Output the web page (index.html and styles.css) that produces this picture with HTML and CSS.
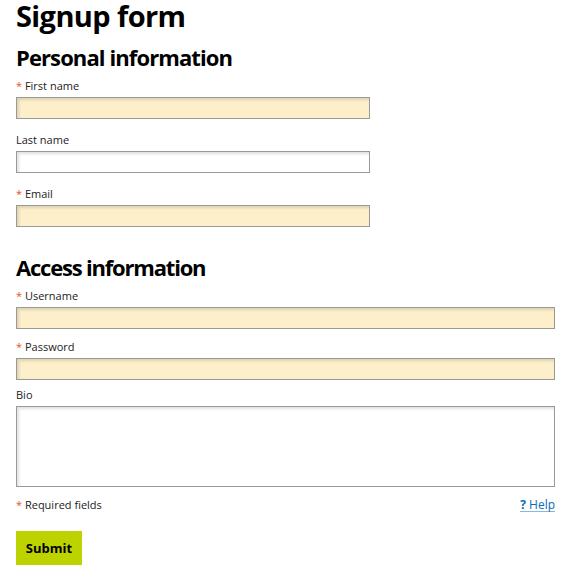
FILE: index.html
```html
<!DOCTYPE html>
<html>
<head>
<meta charset="utf-8">
<link rel="stylesheet" href="styles.css">
</head>
<body>
<form class="signup">
  <h1 class="title">Signup form</h1>
  <h2 class="section-title">Personal information</h2>
  <div class="field">
    <label class="label"><span class="req">*</span> First name</label>
    <input class="input input-short required" type="text">
  </div>
  <div class="field">
    <label class="label">Last name</label>
    <input class="input input-short" type="text">
  </div>
  <div class="field">
    <label class="label"><span class="req">*</span> Email</label>
    <input class="input input-short required" type="text">
  </div>
  <h2 class="section-title section-access">Access information</h2>
  <div class="field field-tight">
    <label class="label"><span class="req">*</span> Username</label>
    <input class="input input-long required" type="text">
  </div>
  <div class="field field-tight">
    <label class="label"><span class="req">*</span> Password</label>
    <input class="input input-long required" type="password">
  </div>
  <div class="field field-tight field-bio">
    <label class="label">Bio</label>
    <textarea class="input input-long textarea"></textarea>
  </div>
  <div class="footer-row">
    <span class="note"><span class="req">*</span> Required fields</span>
    <a class="help" href="#"><b>?</b> Help</a>
  </div>
  <button class="submit" type="button">Submit</button>
</form>
</body>
</html>
```
FILE: styles.css
```css
html, body {
  margin: 0;
  padding: 0;
  background: #fff;
}
body {
  font-family: "Open Sans", "Liberation Sans", sans-serif;
  color: #111;
}
.signup {
  padding: 0 16px;
  display: flex;
  flex-direction: column;
  align-items: flex-start;
}
.title {
  margin: 0;
  font-size: 29px;
  font-weight: 700;
  line-height: 32px;
  letter-spacing: -0.6px;
  color: #000;
}
.section-title {
  margin: 12px 0 0;
  font-size: 22px;
  font-weight: 700;
  line-height: 26px;
  letter-spacing: -0.9px;
  color: #000;
}
.section-access {
  margin-top: 22px;
  letter-spacing: -1.2px;
}
.field {
  display: flex;
  flex-direction: column;
  align-items: flex-start;
  margin-top: 9px;
  margin-bottom: 5px;
}
.field-tight {
  margin-bottom: 2px;
}
.field-bio {
  margin-top: 6px;
}
.label {
  font-size: 11px;
  line-height: 14px;
  color: #222;
  margin-bottom: 4px;
}
.req {
  color: #e2552b;
}
.input {
  box-sizing: border-box;
  height: 22px;
  border: 1px solid #999;
  background: #fff;
  box-shadow: inset 2px 2px 3px rgba(0, 0, 0, 0.12);
  margin: 0;
  padding: 0;
  font: inherit;
}
.required {
  background: #fdefca;
}
.input-short {
  width: 354px;
}
.input-long {
  width: 539px;
}
.textarea {
  height: 81px;
  resize: none;
  display: block;
}
.footer-row {
  width: 539px;
  display: flex;
  justify-content: space-between;
  align-items: center;
  margin-top: 9px;
  font-size: 11px;
  line-height: 14px;
  color: #222;
}
.help {
  color: #0a6db5;
  text-decoration: none;
  border-bottom: 1px solid #8ab7dd;
  font-size: 12px;
  line-height: 13px;
}
.submit {
  margin-top: 19px;
  width: 66px;
  height: 34px;
  border: none;
  background: #bdd300;
  color: #000;
  font-family: "Open Sans", "Liberation Sans", sans-serif;
  font-weight: 700;
  font-size: 13px;
  padding: 0;
}
```
